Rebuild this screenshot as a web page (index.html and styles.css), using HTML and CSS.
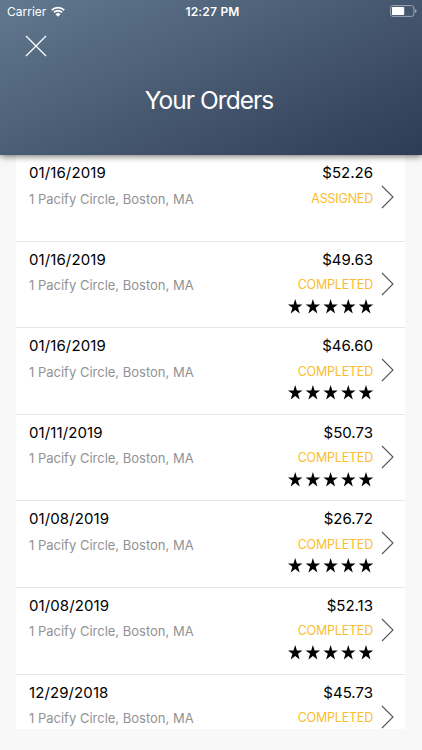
FILE: index.html
```html
<!DOCTYPE html>
<html lang="en">
<head>
    <meta charset="UTF-8">
    <title>Your Orders</title>
    <link rel="stylesheet" href="styles.css">
</head>
<body>
    <svg class="sprite">
        <symbol id="chevron" viewBox="0 0 13 24">
            <path d="M1 1 L12 12 L1 23" fill="none" stroke="#555" stroke-width="1.1"/>
        </symbol>
        <symbol id="stars" viewBox="0 0 86 15">
            <path id="star" d="M7.2 0 L8.9 5.4 H14.4 L10 8.8 L11.7 14.4 L7.2 11 L2.7 14.4 L4.4 8.8 L0 5.4 H5.5 Z"/>
            <use href="#star" x="17.7"/>
            <use href="#star" x="35.4"/>
            <use href="#star" x="53.1"/>
            <use href="#star" x="70.8"/>
        </symbol>
    </svg>

    <div class="header">
        <div class="status-bar">
            <div class="carrier">
                <span>Carrier</span>
                <svg class="wifi" viewBox="0 0 14 11">
                    <path d="M0.8 4.1 A8.8 8.8 0 0 1 13.2 4.1 M3 6.4 A5.7 5.7 0 0 1 11 6.4" fill="none" stroke="#fff" stroke-width="1.8"/>
                    <path d="M7 10.8 L4.5 8.2 A3.6 3.6 0 0 1 9.5 8.2 Z" fill="#fff"/>
                </svg>
            </div>
            <div class="time">12:27 PM</div>
            <svg class="battery" viewBox="0 0 27 12">
                <rect x="0.6" y="0.6" width="23.3" height="10.8" rx="2.4" fill="none" stroke="#9aa6b4" stroke-width="1"/>
                <rect x="2" y="2" width="12.2" height="8" rx="0.8" fill="#fff"/>
                <path d="M25 4 Q26.6 4.6 26.6 6 Q26.6 7.4 25 8 Z" fill="#9aa6b4"/>
            </svg>
        </div>
        <svg class="close" viewBox="0 0 22 22">
            <path d="M1 1 L21 21 M21 1 L1 21" stroke="#fff" stroke-width="1.3"/>
        </svg>
        <h1>Your Orders</h1>
    </div>

    <div class="orders">
        <div class="order">
            <div class="info">
                <div class="date">01/16/2019</div>
                <div class="address">1 Pacify Circle, Boston, MA</div>
            </div>
            <div class="summary">
                <div class="price">$52.26</div>
                <div class="status">ASSIGNED</div>
            </div>
            <svg class="chevron"><use href="#chevron"/></svg>
        </div>
        <div class="order">
            <div class="info">
                <div class="date">01/16/2019</div>
                <div class="address">1 Pacify Circle, Boston, MA</div>
            </div>
            <div class="summary">
                <div class="price">$49.63</div>
                <div class="status">COMPLETED</div>
                <svg class="stars"><use href="#stars"/></svg>
            </div>
            <svg class="chevron"><use href="#chevron"/></svg>
        </div>
        <div class="order">
            <div class="info">
                <div class="date">01/16/2019</div>
                <div class="address">1 Pacify Circle, Boston, MA</div>
            </div>
            <div class="summary">
                <div class="price">$46.60</div>
                <div class="status">COMPLETED</div>
                <svg class="stars"><use href="#stars"/></svg>
            </div>
            <svg class="chevron"><use href="#chevron"/></svg>
        </div>
        <div class="order">
            <div class="info">
                <div class="date">01/11/2019</div>
                <div class="address">1 Pacify Circle, Boston, MA</div>
            </div>
            <div class="summary">
                <div class="price">$50.73</div>
                <div class="status">COMPLETED</div>
                <svg class="stars"><use href="#stars"/></svg>
            </div>
            <svg class="chevron"><use href="#chevron"/></svg>
        </div>
        <div class="order">
            <div class="info">
                <div class="date">01/08/2019</div>
                <div class="address">1 Pacify Circle, Boston, MA</div>
            </div>
            <div class="summary">
                <div class="price">$26.72</div>
                <div class="status">COMPLETED</div>
                <svg class="stars"><use href="#stars"/></svg>
            </div>
            <svg class="chevron"><use href="#chevron"/></svg>
        </div>
        <div class="order">
            <div class="info">
                <div class="date">01/08/2019</div>
                <div class="address">1 Pacify Circle, Boston, MA</div>
            </div>
            <div class="summary">
                <div class="price">$52.13</div>
                <div class="status">COMPLETED</div>
                <svg class="stars"><use href="#stars"/></svg>
            </div>
            <svg class="chevron"><use href="#chevron"/></svg>
        </div>
        <div class="order">
            <div class="info">
                <div class="date">12/29/2018</div>
                <div class="address">1 Pacify Circle, Boston, MA</div>
            </div>
            <div class="summary">
                <div class="price">$45.73</div>
                <div class="status">COMPLETED</div>
            </div>
            <svg class="chevron"><use href="#chevron"/></svg>
        </div>
    </div>
</body>
</html>
```
FILE: styles.css
```css
* {
    box-sizing: border-box;
}

body {
    margin: 0;
    height: 750px;
    overflow: hidden;
    display: flex;
    flex-direction: column;
    background: #f8f8f8;
    color: #000;
    font-family: Inter, "Liberation Sans", sans-serif;
}

svg {
    display: block;
}

.sprite {
    position: absolute;
    width: 0;
    height: 0;
}

.header {
    position: relative;
    z-index: 1;
    flex: none;
    height: 155px;
    color: #fff;
    background: linear-gradient(155deg, #61798f 0%, #2e3b54 100%);
    box-shadow: 0 1px 7px rgba(0, 0, 0, 0.6);
}

.status-bar {
    display: grid;
    grid-template-columns: 1fr auto 1fr;
    align-items: center;
    height: 22px;
    padding: 0 5px 0 7px;
    font-size: 12px;
}

.carrier {
    display: flex;
    align-items: center;
    gap: 5px;
}

.wifi {
    width: 14px;
    height: 11px;
}

.time {
    padding-left: 1px;
    font-weight: 600;
    letter-spacing: 0.2px;
}

.battery {
    width: 27px;
    height: 12px;
    justify-self: end;
}

.close {
    width: 22px;
    height: 22px;
    margin: 13px 0 0 25px;
}

h1 {
    margin: 27px 0 0;
    padding-right: 4px;
    text-align: center;
    font-size: 24.5px;
    line-height: 32px;
    font-weight: 400;
    letter-spacing: -0.95px;
}

.orders {
    flex: none;
    height: 574px;
    margin: 0 17px 0 16px;
    overflow: hidden;
    background: #fff;
}

.order {
    display: flex;
    height: 86.6px;
    padding: 8px 11px 0 13px;
    border-bottom: 1px solid #e6e6e6;
}

.info {
    flex: 1;
}

.summary {
    display: flex;
    flex-direction: column;
    align-items: flex-end;
}

.date,
.price {
    font-size: 15px;
    line-height: 20px;
}

.date {
    letter-spacing: 0.1px;
}

.address {
    margin-top: 5.5px;
    color: #929292;
    font-size: 13px;
    line-height: 20px;
}

.status {
    margin-top: 6.5px;
    color: #fbbd2c;
    font-size: 12.5px;
    line-height: 18px;
    letter-spacing: -0.2px;
}

.stars {
    width: 86px;
    height: 15px;
    margin-top: 4.5px;
    margin-right: -1px;
}

.chevron {
    width: 13px;
    height: 24px;
    margin: 22px 0 0 8px;
}
```
